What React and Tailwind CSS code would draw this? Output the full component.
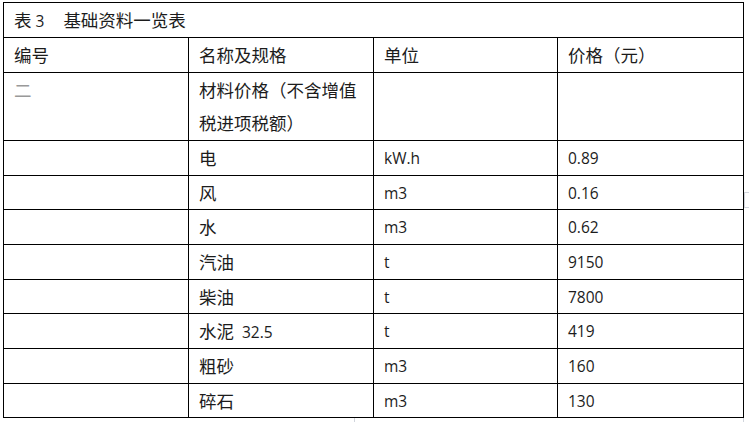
import React from "react";

const cjk = { fontFamily: '"Noto Sans CJK SC", "Noto Sans", sans-serif' };

const rows = [
  { name: "电", unit: "kW.h", price: "0.89", h: "h-[35px]" },
  { name: "风", unit: "m3", price: "0.16", h: "h-[34px]" },
  { name: "水", unit: "m3", price: "0.62", h: "h-[35px]" },
  { name: "汽油", unit: "t", price: "9150", h: "h-[35px]" },
  { name: "柴油", unit: "t", price: "7800", h: "h-[34px]" },
  { name: "水泥", extra: "32.5", unit: "t", price: "419", h: "h-[35px]" },
  { name: "粗砂", unit: "m3", price: "160", h: "h-[35px]" },
  { name: "碎石", unit: "m3", price: "130", h: "h-[34px]" },
];

const Zh = ({ children, className = "" }) => (
  <span className={"text-[17.5px] " + className}>{children}</span>
);

const Latin = ({ children }) => (
  <span className="font-['Open_Sans',sans-serif] text-[15.5px]">{children}</span>
);

const Cell = ({ children, className = "", ...props }) => (
  <td className={"border border-black p-0 px-[10px] align-middle leading-none " + className} {...props}>
    {children}
  </td>
);

const App = () => {
  return (
    <div className="relative h-[422px] w-[749px] overflow-hidden bg-white pl-[3px] pt-[2px] text-[#1c1c1c]" style={cjk}>
      <table className="w-[740px] table-fixed border-collapse border border-black">
        <colgroup>
          <col className="w-[185px]" />
          <col className="w-[185px]" />
          <col className="w-[184px]" />
          <col className="w-[186px]" />
        </colgroup>
        <tbody>
          <tr className="h-[35px]">
            <Cell className="whitespace-nowrap" colSpan={4}>
              <Zh>表</Zh>
              <span className="ml-[4px]"><Latin>3</Latin></span>
              <Zh className="ml-[19px]">基础资料一览表</Zh>
            </Cell>
          </tr>
          <tr className="h-[35px]">
            <Cell><Zh>编号</Zh></Cell>
            <Cell><Zh>名称及规格</Zh></Cell>
            <Cell><Zh>单位</Zh></Cell>
            <Cell><Zh>价格（元）</Zh></Cell>
          </tr>
          <tr className="h-[68px]">
            <Cell className="!align-top !leading-[33px] text-[17.5px]"><span className="text-[#999]">二</span></Cell>
            <Cell className="!align-top !leading-[33px] text-[17.5px]">材料价格（不含增值税进项税额）</Cell>
            <Cell></Cell>
            <Cell></Cell>
          </tr>
          {rows.map((r, i) => (
            <tr key={i} className={r.h}>
              <Cell></Cell>
              <Cell className="whitespace-nowrap">
                <Zh>{r.name}</Zh>
                {r.extra && (
                  <span className="ml-[8px]"><Latin>{r.extra}</Latin></span>
                )}
              </Cell>
              <Cell><Latin>{r.unit}</Latin></Cell>
              <Cell><Latin>{r.price}</Latin></Cell>
            </tr>
          ))}
        </tbody>
      </table>
      {/* faint editor marks at the edges */}
      <div className="absolute left-[744px] top-[192px] h-[16px] w-[6px] border-l border-t border-b border-gray-300"></div>
      <div className="absolute left-[354px] top-[418px] h-[4px] w-[1px] bg-gray-300"></div>
      <div className="absolute left-[743px] top-[418px] h-[4px] w-[1px] bg-gray-300"></div>
    </div>
  );
};

export default App;
